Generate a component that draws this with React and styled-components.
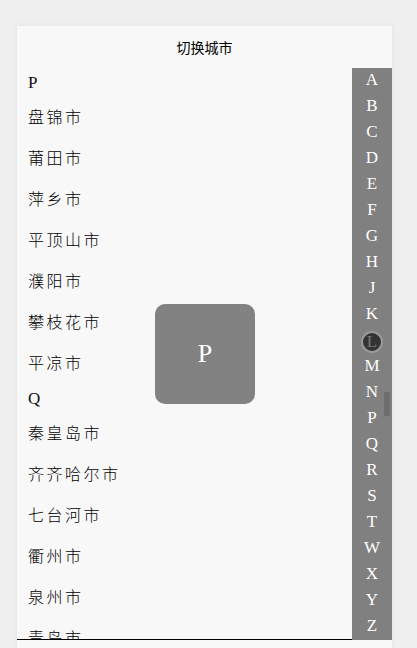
import * as React from "react";
import styled, { createGlobalStyle } from "styled-components";

const GlobalStyle = createGlobalStyle`
  html, body {
    margin: 0;
    padding: 0;
    background: #efefef;
    height: 100%;
    overflow: hidden;
  }
`;

const Phone = styled.div`
  position: relative;
  width: 375px;
  height: 622px;
  margin: 26px 0 0 17px;
  background: #f8f8f8;
  box-shadow: 0 0 6px rgba(0, 0, 0, 0.06);
  display: flex;
  flex-direction: column;
`;

const Header = styled.div`
  height: 42px;
  display: flex;
  align-items: center;
  justify-content: center;
  font-family: "Noto Sans CJK SC", "Noto Sans", sans-serif;
  font-size: 14px;
  color: #000;
`;

const Body = styled.div`
  display: flex;
  height: 572px;
`;

const List = styled.div`
  flex: 1;
  overflow: hidden;
  box-sizing: border-box;
  border-bottom: 1px solid #000;
`;

const GroupTitle = styled.div`
  height: 29px;
  display: flex;
  align-items: center;
  padding-left: 11px;
  font-family: "Liberation Serif", serif;
  font-size: 17px;
  color: #111;
`;

const City = styled.div`
  height: 41px;
  box-sizing: border-box;
  padding: 0 0 3px 11px;
  display: flex;
  align-items: center;
  font-family: "Noto Sans CJK SC", sans-serif;
  font-size: 16px;
  font-weight: 300;
  letter-spacing: 2.5px;
  color: #000;
`;

const IndexBar = styled.div`
  position: relative;
  width: 40px;
  background: #808080;
  display: flex;
  flex-direction: column;
`;

const LetterRow = styled.div`
  height: 26px;
  box-sizing: border-box;
  padding-bottom: 3px;
  display: flex;
  align-items: center;
  justify-content: center;
`;

const Letter = styled.span`
  width: 22px;
  height: 22px;
  box-sizing: border-box;
  display: flex;
  align-items: center;
  justify-content: center;
  border-radius: 50%;
  font-family: "Liberation Serif", serif;
  font-size: 17px;
  background: ${(p) => (p.$active ? "#333" : "transparent")};
  border: ${(p) => (p.$active ? "2px solid #9a9a9a" : "none")};
  color: ${(p) => (p.$active ? "#777" : "#fff")};
  margin-top: ${(p) => (p.$active ? "4px" : "0")};
`;

const Thumb = styled.div`
  position: absolute;
  right: 2px;
  top: 324px;
  width: 6px;
  height: 24px;
  background: #6e6e6e;
`;

const Popup = styled.div`
  position: absolute;
  left: 138px;
  top: 278px;
  width: 100px;
  height: 100px;
  border-radius: 10px;
  background: #828282;
  display: flex;
  align-items: center;
  justify-content: center;
  font-family: "Liberation Serif", serif;
  font-size: 26px;
  color: #fff;
`;

const groups = [
  {
    letter: "P",
    cities: ["盘锦市", "莆田市", "萍乡市", "平顶山市", "濮阳市", "攀枝花市", "平凉市"],
  },
  {
    letter: "Q",
    cities: ["秦皇岛市", "齐齐哈尔市", "七台河市", "衢州市", "泉州市", "青岛市", "曲靖市"],
  },
];

const letters = "ABCDEFGHJKLMNPQRSTWXYZ".split("");

export default function App() {
  return (
    <>
      <GlobalStyle />
      <Phone>
        <Header>切换城市</Header>
        <Body>
          <List>
            {groups.map((g) => (
              <React.Fragment key={g.letter}>
                <GroupTitle>{g.letter}</GroupTitle>
                {g.cities.map((c) => (
                  <City key={c}>{c}</City>
                ))}
              </React.Fragment>
            ))}
          </List>
          <IndexBar>
            {letters.map((l) => (
              <LetterRow key={l}>
                <Letter $active={l === "L"}>{l}</Letter>
              </LetterRow>
            ))}
            <Thumb />
          </IndexBar>
        </Body>
        <Popup>P</Popup>
      </Phone>
    </>
  );
}
